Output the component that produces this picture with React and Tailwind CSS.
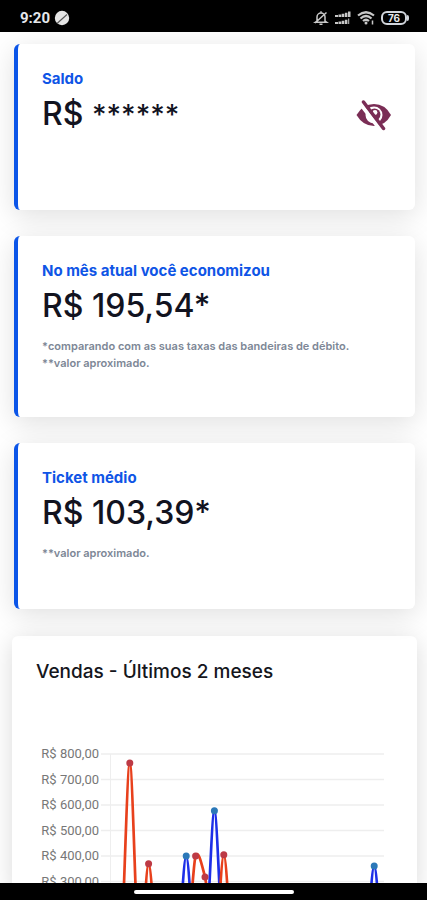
import React from "react";

const STEP = 9.4;
const ORIGIN_X = 75;
const TOP = 14;
const UNIT = 0.255;
const TICKS = [800, 700, 600, 500, 400, 300];

const series = [
    {
        name: "blue",
        stroke: "#1d2fe8",
        dot: "#2b78b8",
        values: { 8: 400, 11: 577, 28: 361 },
    },
    {
        name: "red",
        stroke: "#e8401c",
        dot: "#bd3a45",
        values: { 2: 765, 4: 370, 9: 400, 10: 318, 12: 405 },
    },
];

const toPoints = (values) =>
    Array.from({ length: 30 }, (_, i) => ({
        x: ORIGIN_X + i * STEP,
        y: TOP + (800 - (values[i] || 0)) * UNIT,
        visible: Boolean(values[i]),
    }));

// Smooth line through all the points
const toPath = (points) =>
    points.reduce((path, p, i) => {
        if (i === 0) return `M${p.x} ${p.y}`;
        const a = points[i - 1];
        const before = points[i - 2] || a;
        const after = points[i + 1] || p;
        const slopeA = (p.y - before.y) * 0.1;
        const slopeP = (after.y - a.y) * 0.1;
        return `${path} C${a.x + STEP * 0.3} ${a.y + slopeA} ${p.x - STEP * 0.3} ${p.y - slopeP} ${p.x} ${p.y}`;
    }, "");

const StatusBar = () => (
    <header className="flex h-8 shrink-0 items-center justify-between bg-black pt-1 pr-[18px] pl-5 text-gray-200">
        <div className="flex items-center gap-1">
            <span className="font-['Roboto',sans-serif] text-[15px] font-bold">9:20</span>
            <svg className="size-4" viewBox="0 0 16 16" aria-hidden="true">
                <circle cx="8" cy="8" r="7.2" fill="#e5e5e5" />
                <path d="M3 13.5 L13 4.5" stroke="#555" strokeWidth="1.1" />
            </svg>
        </div>
        <div className="flex items-center gap-1.5">
            <svg className="size-4" viewBox="0 0 16 16" fill="none" stroke="#c8c8c8" strokeWidth="1.5" aria-hidden="true">
                <path d="M4 11 V7 a4 4 0 0 1 8 0 v4 l1.7 1.2 h-11.4 z M6.5 14.3 h3 M8 1.3 v1.7 M2 13 L13.5 2.5" />
            </svg>
            <svg className="size-4" viewBox="0 0 16 16" fill="#c8c8c8" aria-hidden="true">
                <path d="M0 5h3v2H0z M3.5 4.5h2.7V7H3.5z M6.7 3.7h2.6V7H6.7z M9.9 2.7h2.5V7H9.9z M13 1.5h2.5V7H13z" />
                <path d="M0 12h3v2H0z M3.5 11.5h2.7V14H3.5z M6.7 10.7h2.6V14H6.7z M9.9 9.7h2.5V14H9.9z M13.2 8.5h1v5.5h-1z" />
            </svg>
            <svg className="h-4 w-[18px]" viewBox="0 0 18 16" fill="none" stroke="#c8c8c8" strokeWidth="2.2" aria-hidden="true">
                <path d="M1 5.5 Q9 -1 17 5.5 M3.5 8.5 Q9 3.5 14.5 8.5 M6 11 Q9 8.5 12 11" />
                <circle cx="9" cy="13" r="1.5" fill="#c8c8c8" stroke="none" />
                <path d="M15.5 10.5 v4" strokeWidth="1.5" />
            </svg>
            <div className="flex items-center">
                <span className="flex h-3.5 w-[26px] items-center justify-center rounded-md border-2 border-gray-300 text-[10px] font-bold">
                    76
                </span>
                <span className="h-1.5 w-0.5 rounded-r bg-gray-300" />
            </div>
        </div>
    </header>
);

const HiddenEye = () => (
    <svg className="h-8 w-9" viewBox="0 0 36 32" aria-hidden="true">
        <path d="M1.5 15 Q8 4 19 4 T36 15 Q30 26 19 26 T1.5 15z" fill="#7a2d55" />
        <circle cx="19" cy="15" r="8.5" fill="#fff" />
        <circle cx="19.5" cy="14.5" r="6" fill="#7a2d55" />
        <circle cx="20" cy="12.5" r="2.4" fill="#fff" />
        <path d="M4.5 2.5 L25.5 30" stroke="#fff" strokeWidth="4" />
        <path d="M8.5 2 L28.500 28.5" stroke="#7a2d55" strokeWidth="3.5" strokeLinecap="round" />
    </svg>
);

const InfoCard = ({ title, value, notes = [], children }) => (
    <section className="flex min-h-[166px] items-start justify-between rounded-md border-l-4 border-[#0b55e8] bg-white px-6 pt-6 pb-[45px] shadow-[0_6px_28px_rgba(0,0,0,0.13)]">
        <div>
            <h2 className="text-[15px] leading-[22px] font-bold text-[#0f55e6]">{title}</h2>
            <p className="mt-1 text-[32px] leading-10 font-medium text-[#12131f]">{value}</p>
            {notes.length > 0 && (
                <div className="mt-3 text-[11px] leading-[17px] font-semibold text-[#7d8796]">
                    {notes.map((note) => (
                        <p key={note}>{note}</p>
                    ))}
                </div>
            )}
        </div>
        {children}
    </section>
);

const SalesChart = () => (
    <svg className="mt-14 w-full" viewBox="0 0 357 150" role="img" aria-label="Vendas">
        {TICKS.map((tick) => {
            const y = TOP + (800 - tick) * UNIT;
            return (
                <g key={tick}>
                    <line x1="65" x2="348" y1={y} y2={y} stroke="#eeeeee" strokeWidth="1.5" />
                    <text x="63" y={y + 4} textAnchor="end" fill="#777" className="font-['Roboto',sans-serif] text-[13px]">
                        R$ {tick},00
                    </text>
                </g>
            );
        })}
        <line x1="74.5" x2="74.5" y1={TOP} y2="150" stroke="#eeeeee" />
        {series.map((s) => {
            const points = toPoints(s.values);
            return (
                <g key={s.name}>
                    <path d={toPath(points)} fill="none" stroke={s.stroke} strokeWidth="2.7" />
                    {points
                        .filter((p) => p.visible)
                        .map((p) => (
                            <circle key={p.x} cx={p.x} cy={p.y} r="3.5" fill={s.dot} />
                        ))}
                </g>
            );
        })}
    </svg>
);

const App = () => {
    return (
        <div className="flex h-screen flex-col overflow-hidden bg-white font-['Inter',sans-serif]">
            <StatusBar />
            <main className="min-h-0 flex-1 overflow-hidden pt-3 pr-2.5 pl-3">
                <div className="flex flex-col gap-[26px] px-0.5">
                    <InfoCard
                        title="Saldo"
                        value={
                            <>
                                R$ <span className="text-[28px]">******</span>
                            </>
                        }
                    >
                        <button type="button" aria-label="Mostrar saldo" className="mt-8">
                            <HiddenEye />
                        </button>
                    </InfoCard>
                    <InfoCard
                        title="No mês atual você economizou"
                        value="R$ 195,54*"
                        notes={["*comparando com as suas taxas das bandeiras de débito.", "**valor aproximado."]}
                    />
                    <InfoCard title="Ticket médio" value="R$ 103,39*" notes={["**valor aproximado."]} />
                </div>
                <section className="mt-[27px] rounded-md bg-white px-6 pt-6 shadow-[0_4px_24px_rgba(0,0,0,0.15)]">
                    <h2 className="text-[19px] leading-6 font-medium text-[#15161c]">Vendas - Últimos 2 meses</h2>
                    <SalesChart />
                </section>
            </main>
            <footer className="flex h-[17px] shrink-0 items-center justify-center bg-black">
                <span className="h-1 w-40 rounded-full bg-white" />
            </footer>
        </div>
    );
};

export default App;
